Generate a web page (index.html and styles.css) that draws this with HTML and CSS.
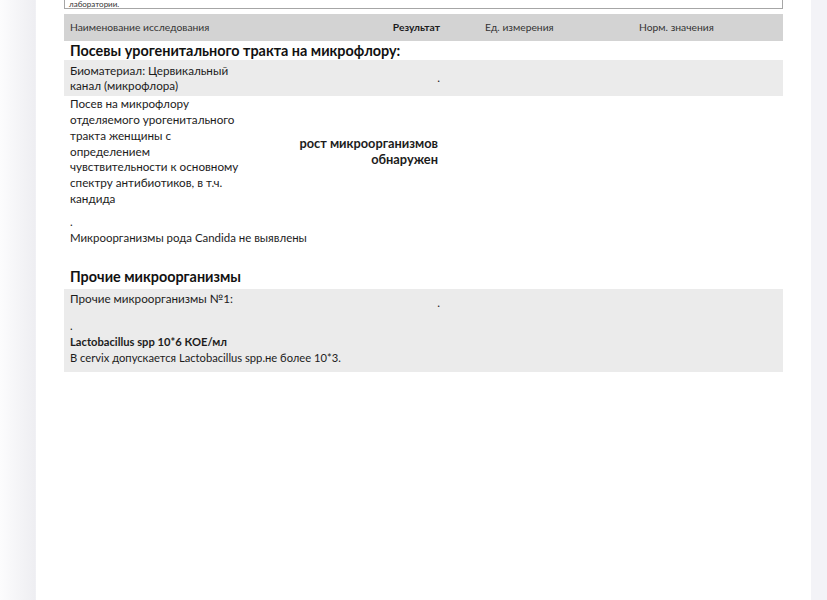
FILE: index.html
```html
<!DOCTYPE html>
<html lang="ru">
<head>
    <meta charset="UTF-8">
    <title>Результаты исследования</title>
    <link rel="stylesheet" href="styles.css">
</head>
<body>
    <div class="sheet">
        <div class="note">лаборатории.</div>

        <div class="row head">
            <div class="c1">Наименование исследования</div>
            <div class="c2"><b>Результат</b></div>
            <div class="c3">Ед. измерения</div>
            <div class="c4">Норм. значения</div>
        </div>

        <h2>Посевы урогенитального тракта на микрофлору:</h2>
        <div class="row grey first">
            <div class="c1">Биоматериал: Цервикальный канал (микрофлора)</div>
            <div class="c2 mid">.</div>
            <div class="c3"></div>
            <div class="c4"></div>
        </div>
        <div class="row">
            <div class="c1">Посев на микрофлору отделяемого урогенитального тракта женщины с определением чувствительности к основному спектру антибиотиков, в т.ч. кандида</div>
            <div class="c2 mid result">рост микроорганизмов обнаружен</div>
            <div class="c3"></div>
            <div class="c4"></div>
            <div class="comment">
                <p>.</p>
                <p>Микроорганизмы рода Candida не выявлены</p>
            </div>
        </div>

        <h2 class="gap">Прочие микроорганизмы</h2>
        <div class="row grey other">
            <div class="c1 wide">Прочие микроорганизмы №1:</div>
            <div class="c2 dot">.</div>
            <div class="c3"></div>
            <div class="c4"></div>
            <div class="comment tall">
                <p>.</p>
                <p><b>Lactobacillus spp 10*6 КОЕ/мл</b></p>
                <p>В cervix допускается Lactobacillus spp.не более 10*3.</p>
            </div>
        </div>
    </div>
</body>
</html>
```

FILE: styles.css
```css
html, body {
    margin: 0;
    height: 100%;
}
body {
    font-family: Lato, "Open Sans", sans-serif;
    color: #1c1c1c;
    background: linear-gradient(to right, #fcfcfd 0, #eeeef2 35px, #f3f3f7 36px);
    overflow: hidden;
}
.sheet {
    display: flow-root;
    margin-left: 36px;
    width: 775px;
    min-height: 100%;
    background-color: #fff;
    padding: 0 28px;
    box-sizing: border-box;
}
.note {
    margin-top: -12px;
    height: 21px;
    border: 1px solid #a6a6a6;
    font-size: 8px;
    line-height: 8px;
    padding: 11px 4px 0;
    box-sizing: border-box;
    color: #333;
}
.row {
    display: grid;
    grid-template-columns: 186px 190px 151px 1fr;
    font-size: 11.7px;
    line-height: 15.7px;
}
.row > div {
    padding: 0 6px;
}
.head {
    margin-top: 5px;
    background-color: #d3d3d3;
    font-size: 10.3px;
    height: 27px;
    align-items: center;
    color: #333;
}
.head b {
    color: #1c1c1c;
}
.grey {
    background-color: #ebebeb;
}
.row .c1 {
    padding: 0 8px 0 6px;
}
.head .c1 {
    padding: 0 6px;
}
.first .c1 {
    padding-top: 2.5px;
    padding-bottom: 2.5px;
}
.other .c1 {
    padding-top: 2px;
}
.row .c2 {
    text-align: right;
    padding-right: 0;
}
.row .c3 {
    padding-left: 45px;
}
.row .c4 {
    padding-left: 48px;
}
.mid {
    align-self: center;
}
.result {
    font-size: 12.8px;
    font-weight: bold;
    line-height: 16.5px;
    padding-right: 2px !important;
}
.row .dot {
    padding-top: 6px;
}
.wide {
    white-space: nowrap;
}
.row .comment {
    grid-column: 1 / -1;
    padding-top: 8px;
    font-size: 11.45px;
}
.comment p {
    margin: 0;
}
.row .comment.tall {
    padding-top: 8px;
    padding-bottom: 6px;
    font-size: 11.2px;
}
h2 {
    margin: 0;
    padding: 1px 6px 0;
    font-size: 14.4px;
    line-height: 18px;
    font-weight: bold;
    color: #111;
}
h2.gap {
    margin-top: 21px;
    padding-bottom: 3px;
}
```
